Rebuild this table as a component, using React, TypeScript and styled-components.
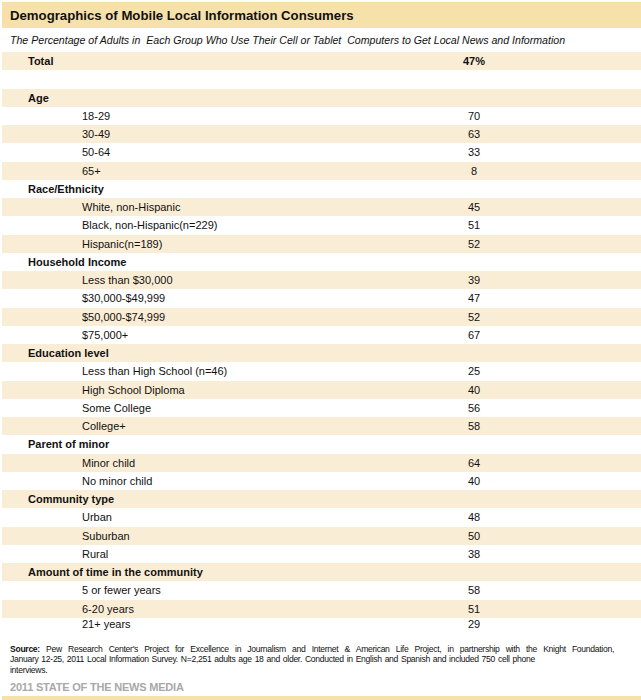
import React from "react";
import styled, { createGlobalStyle } from "styled-components";

const Global = createGlobalStyle`
  html, body { margin: 0; padding: 0; background: #fff; }
  body { font-family: "Liberation Sans", Arial, sans-serif; color: #000; }
`;

const Page = styled.div`
  width: 641px;
  height: 700px;
  padding-top: 2px;
  padding-left: 2px;
  box-sizing: border-box;
  display: flex;
  flex-direction: column;
  overflow: hidden;
  & > * { flex-shrink: 0; }
`;

const TitleBar = styled.div`
  height: 26px;
  background: #f7e1aa;
  display: flex;
  align-items: center;
  padding-left: 8px;
  font-size: 13.2px;
  font-weight: bold;
  color: #111;
`;

const Subtitle = styled.div`
  height: 24px;
  display: flex;
  align-items: center;
  padding-left: 8px;
  font-size: 10.6px;
  font-style: italic;
  white-space: pre;
  color: #111;
`;

const Table = styled.div`
  display: flex;
  flex-direction: column;
`;

const Row = styled.div<{ $shaded: boolean; $last?: boolean }>`
  height: ${(p) => (p.$last ? "12px" : "18.25px")};
  flex-shrink: 0;
  display: flex;
  align-items: center;
  background: ${(p) => (p.$shaded ? "#faedd5" : "#fff")};
  font-size: 11px;
  color: #111;
`;

const Label = styled.div<{ $kind: "cat" | "item" }>`
  width: 412px;
  box-sizing: border-box;
  padding-left: ${(p) => (p.$kind === "cat" ? "26px" : "80px")};
  font-weight: ${(p) => (p.$kind === "cat" ? "bold" : "normal")};
  white-space: pre;
`;

const Value = styled.div<{ $bold?: boolean }>`
  width: 120px;
  text-align: center;
  font-weight: ${(p) => (p.$bold ? "bold" : "normal")};
`;

const Source = styled.div`
  margin-top: 14px;
  padding-left: 8px;
  width: 612px;
  box-sizing: border-box;
  font-size: 8.6px;
  line-height: 10.6px;
  color: #111;
  letter-spacing: -0.3px;
  word-spacing: 0.8px;
`;

const SourceLine = styled.div<{ $justify?: boolean }>`
  white-space: nowrap;
  text-align: ${(p) => (p.$justify ? "justify" : "left")};
  text-align-last: ${(p) => (p.$justify ? "justify" : "left")};
  white-space: ${(p) => (p.$justify ? "normal" : "nowrap")};
`;

const Credit = styled.div`
  margin-top: 5px;
  padding-left: 8px;
  font-size: 11px;
  line-height: 13px;
  font-weight: bold;
  color: #a8a8a8;
  letter-spacing: -0.2px;
`;

const BottomBar = styled.div`
  margin-top: 2px;
  height: 8px;
  background: #f7e1aa;
`;

type R = { kind: "cat" | "item" | "blank"; label?: string; value?: string; bold?: boolean };

const rows: R[] = [
  { kind: "cat", label: "Total", value: "47%", bold: true },
  { kind: "blank" },
  { kind: "cat", label: "Age" },
  { kind: "item", label: "18-29", value: "70" },
  { kind: "item", label: "30-49", value: "63" },
  { kind: "item", label: "50-64", value: "33" },
  { kind: "item", label: "65+", value: "8" },
  { kind: "cat", label: "Race/Ethnicity" },
  { kind: "item", label: "White, non-Hispanic", value: "45" },
  { kind: "item", label: "Black, non-Hispanic(n=229)", value: "51" },
  { kind: "item", label: "Hispanic(n=189)", value: "52" },
  { kind: "cat", label: "Household Income" },
  { kind: "item", label: "Less than $30,000", value: "39" },
  { kind: "item", label: "$30,000-$49,999", value: "47" },
  { kind: "item", label: "$50,000-$74,999", value: "52" },
  { kind: "item", label: "$75,000+", value: "67" },
  { kind: "cat", label: "Education level" },
  { kind: "item", label: "Less than High School (n=46)", value: "25" },
  { kind: "item", label: "High School Diploma", value: "40" },
  { kind: "item", label: "Some College", value: "56" },
  { kind: "item", label: "College+", value: "58" },
  { kind: "cat", label: "Parent of minor" },
  { kind: "item", label: "Minor child", value: "64" },
  { kind: "item", label: "No minor child", value: "40" },
  { kind: "cat", label: "Community type" },
  { kind: "item", label: "Urban", value: "48" },
  { kind: "item", label: "Suburban", value: "50" },
  { kind: "item", label: "Rural", value: "38" },
  { kind: "cat", label: "Amount of time in the community" },
  { kind: "item", label: "5 or fewer years", value: "58" },
  { kind: "item", label: "6-20 years", value: "51" },
  { kind: "item", label: "21+ years", value: "29" },
];

export default function App() {
  return (
    <>
      <Global />
      <Page>
        <TitleBar>Demographics of Mobile Local Information Consumers</TitleBar>
        <Subtitle>
          {"The Percentage of Adults in  Each Group Who Use Their Cell or Tablet  Computers to Get Local News and Information"}
        </Subtitle>
        <Table>
          {rows.map((r, i) => (
            <Row key={i} $shaded={i % 2 === 0} $last={i === rows.length - 1}>
              {r.kind !== "blank" && (
                <>
                  <Label $kind={r.kind}>{r.label}</Label>
                  <Value $bold={r.bold}>{r.value}</Value>
                </>
              )}
            </Row>
          ))}
        </Table>
        <Source>
          <SourceLine $justify>
            <b>Source:</b> Pew Research Center's Project for Excellence in Journalism and Internet &amp; American Life Project, in partnership with the Knight Foundation,
          </SourceLine>
          <SourceLine>
            January 12-25, 2011 Local Information Survey. N=2,251 adults age 18 and older. Conducted in English and Spanish and included 750 cell phone
          </SourceLine>
          <SourceLine>interviews.</SourceLine>
        </Source>
        <Credit>2011 STATE OF THE NEWS MEDIA</Credit>
        <BottomBar />
      </Page>
    </>
  );
}
